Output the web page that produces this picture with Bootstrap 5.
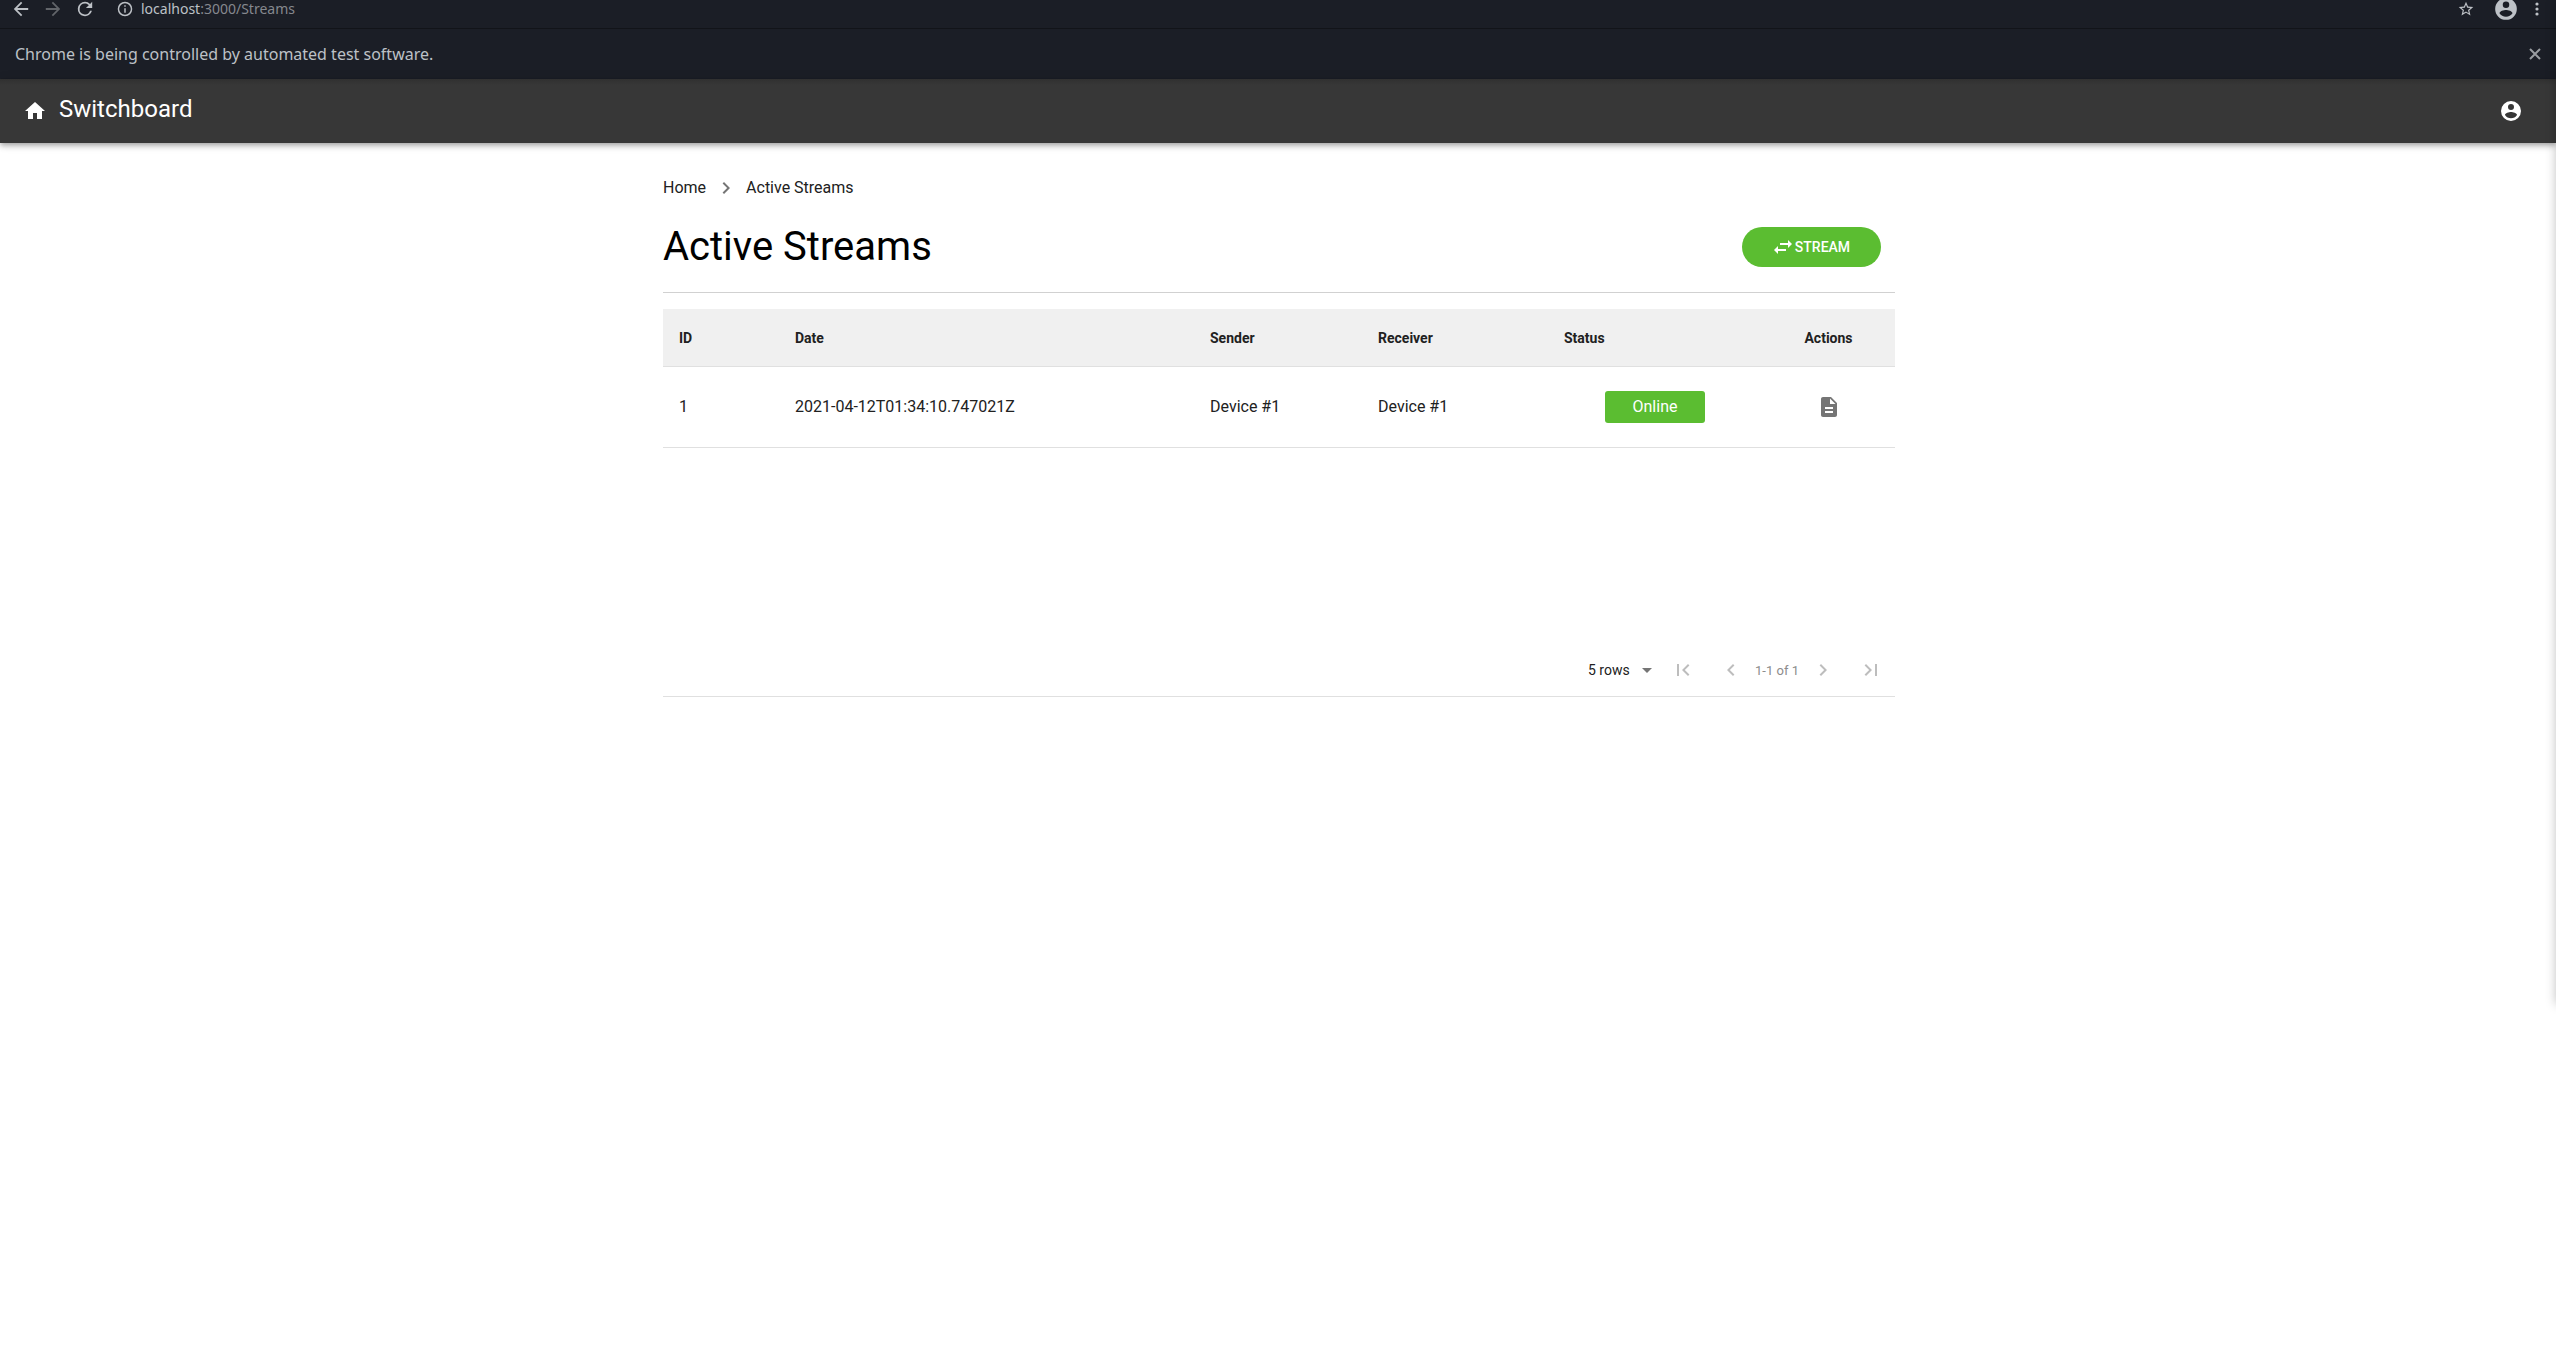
<!DOCTYPE html>
<html lang="en">
<head>
<meta charset="utf-8">
<meta name="viewport" content="width=device-width, initial-scale=1">
<title>Switchboard - Active Streams</title>
<link href="https://cdn.jsdelivr.net/npm/bootstrap@5.3.0/dist/css/bootstrap.min.css" rel="stylesheet">
<style>
  body { font-family: Roboto, "Liberation Sans", sans-serif; font-size: 16px; line-height: 24px; color: #212121; background: #fff; }
  svg { display: block; fill: currentColor; flex: none; }
  button { line-height: 24px; }
  .icon-button { border: 0; background: none; padding: 0; color: inherit; display: flex; align-items: center; justify-content: center; }

  .browser { background: #1b1e26; color: #bdc1c6; font-family: "Noto Sans", sans-serif; }
  .toolbar { height: 28px; padding: 0 14px 10px 12px; }
  .tool-group { gap: 14px; }
  .address-line { margin-left: 9px; gap: 8px; font-size: 14px; line-height: 18px; }
  .address-line .path { color: #85888e; }
  .faded { color: #62656a; }
  .menu-dots { margin-left: 10px; }
  .infobar { height: 51px; border-top: 1px solid #121419; padding: 0 14px 0 15px; }
  .infobar .close-x { color: #9a9da1; }

  .appbar { height: 64px; padding: 0 32px 0 22px; background: linear-gradient(#303030, #373737 6px); color: #fff;
    box-shadow: 0 2px 4px -1px rgba(0,0,0,.2), 0 4px 5px 0 rgba(0,0,0,.14), 0 1px 10px 0 rgba(0,0,0,.12); }
  .appbar a { color: #fff; text-decoration: none; }
  .brand-name { font-size: 24px; line-height: 32px; margin-left: 11px; padding-bottom: 4px; }

  .page { max-width: 1280px; padding: 33px 23px 0 25px; }
  .crumbs a, .crumbs span { color: #212121; text-decoration: none; }
  .crumbs svg { color: #757575; margin: 0 8px; }
  .title-row { padding: 21px 14px 19px 0; border-bottom: 1px solid #d1d1d1; margin-bottom: 16px; }
  .title-row h1 { font-size: 40px; line-height: 52px; font-weight: 400; color: #000; }
  .green { background: #5bbd31; color: #fff; }
  .stream-btn { width: 139px; height: 40px; border: 0; border-radius: 20px; font-size: 14px; font-weight: 500; gap: 2px; }

  .streams { table-layout: fixed; width: 100%; border-collapse: separate; border-spacing: 0; }
  .streams th, .streams td { padding: 0 16px; border-bottom: 1px solid #e0e0e0; text-align: left; vertical-align: middle; }
  .streams th { height: 58px; background: #f0f0f0; font-size: 14px; font-weight: 700; }
  .streams td { height: 81px; }
  .streams .mid { text-align: center; }
  .status-pill { width: 100px; height: 32px; line-height: 32px; border-radius: 3px; margin: 0 auto; text-align: center; }
  .doc-btn { color: #757575; margin: 0 auto; }
  .spare-rows { height: 196px; }
  .pager { height: 53px; border-bottom: 1px solid #e0e0e0; color: #bdbdbd; }
  .pager .icon-button { width: 48px; height: 48px; }
  .pager .range { width: 44px; font-size: 13px; color: #8c8c8c; text-align: center; white-space: nowrap; padding-top: 2px; }
  .rows-pick { color: #757575; }
  .rows-pick select { appearance: none; border: 0; background: none; padding: 0; width: 71px; height: 24px; font-size: 14px; color: #212121; }
  .rows-pick svg { position: absolute; right: 0; top: 0; pointer-events: none; }

  /* closed side drawer: only its shadow reaches the window */
  .drawer { position: fixed; top: 0; left: 100%; width: 240px; height: 1004px; box-shadow: 0 0 10px rgba(0,0,0,.25); }
</style>
<script src="https://cdn.jsdelivr.net/npm/bootstrap@5.3.0/dist/js/bootstrap.bundle.min.js"></script>
</head>
<body>
<div class="browser">
  <div class="toolbar d-flex align-items-center justify-content-between overflow-hidden">
    <div class="d-flex align-items-center tool-group">
      <button class="icon-button" aria-label="Back"><svg width="18" height="18" viewBox="2 2 20 20"><path d="M20 11H7.83l5.59-5.59L12 4l-8 8 8 8 1.41-1.41L7.83 13H20v-2z"/></svg></button>
      <button class="icon-button faded" aria-label="Forward"><svg width="18" height="18" viewBox="2 2 20 20"><path d="M12 4l-1.41 1.41L16.17 11H4v2h12.17l-5.58 5.59L12 20l8-8z"/></svg></button>
      <button class="icon-button" aria-label="Reload"><svg width="18" height="18" viewBox="2 2 20 20"><path d="M17.65 6.35A7.96 7.96 0 0 0 12 4a8 8 0 1 0 7.73 10h-2.08A6 6 0 1 1 12 6c1.66 0 3.14.69 4.22 1.78L13 11h7V4l-2.35 2.35z"/></svg></button>
      <div class="address-line d-flex align-items-center">
        <svg width="16" height="16" viewBox="1 1 22 22"><path d="M11 17h2v-6h-2v6zm1-15a10 10 0 1 0 0 20 10 10 0 0 0 0-20zm0 18a8 8 0 1 1 0-16 8 8 0 0 1 0 16zM11 9h2V7h-2v2z"/></svg>
        <span>localhost<span class="path">:3000/Streams</span></span>
      </div>
    </div>
    <div class="d-flex align-items-center">
      <button class="icon-button" aria-label="Bookmark"><svg width="16" height="16" viewBox="1 1 22 22"><path d="M22 9.24l-7.19-.62L12 2 9.19 8.63 2 9.24l5.46 4.73L5.82 21 12 17.27 18.18 21l-1.63-7.03L22 9.24zM12 15.4l-3.76 2.27 1-4.28-3.32-2.88 4.38-.38L12 6.1l1.71 4.04 4.38.38-3.32 2.88 1 4.28L12 15.4z"/></svg></button>
      <button class="icon-button ms-3" aria-label="Profile"><svg width="32" height="26" viewBox="-1 0 26 24"><path d="M12 2a10 10 0 1 0 0 20 10 10 0 0 0 0-20zm0 3a3 3 0 1 1 0 6 3 3 0 0 1 0-6zm0 14.2c-2.5 0-4.71-1.28-6-3.22.03-1.99 4-3.08 6-3.08s5.970 1.090 6 3.080a7.200 7.200 0 0 1-6 3.220z"/></svg></button>
      <button class="icon-button menu-dots" aria-label="Menu"><svg width="10" height="16" viewBox="0 0 10 16"><circle cx="5" cy="3" r="1.600"/><circle cx="5" cy="8" r="1.600"/><circle cx="5" cy="13" r="1.600"/></svg></button>
    </div>
  </div>
  <div class="infobar d-flex align-items-center justify-content-between">
    <span>Chrome is being controlled by automated test software.</span>
    <button class="icon-button close-x" aria-label="Close"><svg width="14" height="14" viewBox="0 0 14 14"><path d="M2 2l10 10M12 2L2 12" stroke="currentColor" stroke-width="2"/></svg></button>
  </div>
</div>

<header class="appbar d-flex align-items-center justify-content-between">
  <a href="#" class="d-flex align-items-center">
    <svg width="26" height="24" viewBox="1 0 22 24" preserveAspectRatio="xMidYMid meet"><path d="M10 20v-6h4v6h5v-8h3L12 3 2 12h3v8z"/></svg>
    <span class="brand-name">Switchboard</span>
  </a>
  <button class="icon-button" aria-label="Account"><svg width="26" height="24" viewBox="0 0 24 24"><path d="M12 2a10 10 0 1 0 0 20 10 10 0 0 0 0-20zm0 3a3 3 0 1 1 0 6 3 3 0 0 1 0-6zm0 14.2a7.200 7.200 0 0 1-6-3.220c.03-1.990 4-3.080 6-3.080s5.970 1.090 6 3.080a7.200 7.200 0 0 1-6 3.220z"/></svg></button>
</header>

<main class="page mx-auto">
  <nav class="crumbs d-flex align-items-center" aria-label="Breadcrumb">
    <a href="#">Home</a>
    <svg width="24" height="24" viewBox="0 0 24 24"><path d="M10 6L8.590 7.410 13.170 12l-4.580 4.590L10 18l6-6z"/></svg>
    <span>Active Streams</span>
  </nav>
  <div class="title-row d-flex align-items-center justify-content-between">
    <h1 class="m-0">Active Streams</h1>
    <button class="stream-btn green d-flex align-items-center justify-content-center">
      <svg width="20" height="20" viewBox="2 2 20 20"><path d="M7 11l-4 4 4 4v-3h8v-2H7v-3zm14-2l-4-4v3H9v2h8v3l4-4z"/></svg>STREAM
    </button>
  </div>

  <table class="streams">
    <colgroup><col style="width:116px"><col style="width:415px"><col style="width:168px"><col style="width:186px"><col style="width:214px"><col style="width:133px"></colgroup>
    <thead><tr><th>ID</th><th>Date</th><th>Sender</th><th>Receiver</th><th>Status</th><th class="mid">Actions</th></tr></thead>
    <tbody><tr>
      <td>1</td><td>2021-04-12T01:34:10.747021Z</td><td>Device #1</td><td>Device #1</td>
      <td><div class="status-pill green">Online</div></td>
      <td class="mid"><button class="icon-button doc-btn" aria-label="Details"><svg width="24" height="24" viewBox="0 0 24 24"><path d="M14 2H6c-1.100 0-1.990.9-1.990 2L4 20c0 1.100.89 2 1.990 2H18c1.100 0 2-.9 2-2V8l-6-6zm2 16H8v-2h8v2zm0-4H8v-2h8v2zm-3-5V3.500L18.500 9H13z"/></svg></button></td>
    </tr></tbody>
  </table>
  <div class="spare-rows"></div>
  <div class="pager d-flex align-items-center justify-content-end">
    <div class="rows-pick position-relative">
      <select aria-label="Rows per page"><option>5 rows</option><option>10 rows</option><option>20 rows</option></select>
      <svg width="24" height="24" viewBox="0 0 24 24"><path d="M7 10l5 5 5-5z"/></svg>
    </div>
    <button class="icon-button" aria-label="First page"><svg width="24" height="24" viewBox="0 0 24 24"><path d="M18.410 16.590L13.820 12l4.590-4.590L17 6l-6 6 6 6zM6 6h2v12H6z"/></svg></button>
    <button class="icon-button" aria-label="Previous page"><svg width="24" height="24" viewBox="0 0 24 24"><path d="M15.410 7.410L14 6l-6 6 6 6 1.410-1.410L10.830 12z"/></svg></button>
    <span class="range">1-1 of 1</span>
    <button class="icon-button" aria-label="Next page"><svg width="24" height="24" viewBox="0 0 24 24"><path d="M10 6L8.590 7.410 13.170 12l-4.580 4.590L10 18l6-6z"/></svg></button>
    <button class="icon-button" aria-label="Last page"><svg width="24" height="24" viewBox="0 0 24 24"><path d="M5.590 7.410L10.180 12l-4.590 4.590L7 18l6-6-6-6zM16 6h2v12h-2z"/></svg></button>
  </div>
</main>
<div class="drawer" aria-hidden="true"></div>
</body>
</html>
